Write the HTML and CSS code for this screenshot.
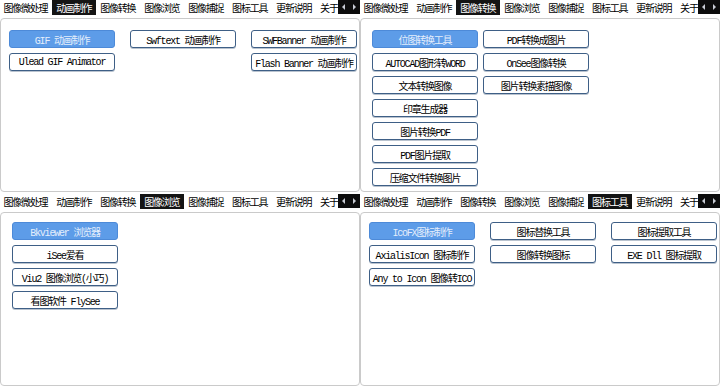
FILE: index.html
```html
<!DOCTYPE html>
<html lang="zh-CN">
<head>
  <meta charset="UTF-8">
  <title>图像工具集</title>
  <link rel="stylesheet" href="styles.css">
</head>
<body>

  <div class="screen">

    <!-- 动画制作 -->
    <div class="quad quad-top">
      <div class="tabbar">
        <div class="tabs">
          <span class="tab">图像微处理</span>
          <span class="tab active">动画制作</span>
          <span class="tab">图像转换</span>
          <span class="tab">图像浏览</span>
          <span class="tab">图像捕捉</span>
          <span class="tab">图标工具</span>
          <span class="tab">更新说明</span>
          <span class="tab">关于</span>
        </div>
        <div class="arrows"><span class="arr-l"></span><span class="arr-r"></span></div>
      </div>
      <div class="panel panel-three">
        <div class="col">
          <button class="btn selected">GIF 动画制作</button>
          <button class="btn">Ulead GIF Animator</button>
        </div>
        <div class="col">
          <button class="btn">Swftext 动画制作</button>
        </div>
        <div class="col">
          <button class="btn">SWFBanner 动画制作</button>
          <button class="btn">Flash Banner 动画制作</button>
        </div>
      </div>
    </div>

    <!-- 图像转换 -->
    <div class="quad quad-top">
      <div class="tabbar">
        <div class="tabs">
          <span class="tab">图像微处理</span>
          <span class="tab">动画制作</span>
          <span class="tab active">图像转换</span>
          <span class="tab">图像浏览</span>
          <span class="tab">图像捕捉</span>
          <span class="tab">图标工具</span>
          <span class="tab">更新说明</span>
          <span class="tab">关于</span>
        </div>
        <div class="arrows"><span class="arr-l"></span><span class="arr-r"></span></div>
      </div>
      <div class="panel panel-two">
        <div class="col">
          <button class="btn selected">位图转换工具</button>
          <button class="btn">AUTOCAD图形转WORD</button>
          <button class="btn">文本转换图像</button>
          <button class="btn">印章生成器</button>
          <button class="btn">图片转换PDF</button>
          <button class="btn">PDF图片提取</button>
          <button class="btn">压缩文件转换图片</button>
        </div>
        <div class="col">
          <button class="btn">PDF转换成图片</button>
          <button class="btn">OnSee图像转换</button>
          <button class="btn">图片转换素描图像</button>
        </div>
      </div>
    </div>

    <!-- 图像浏览 -->
    <div class="quad quad-bottom">
      <div class="tabbar">
        <div class="tabs">
          <span class="tab">图像微处理</span>
          <span class="tab">动画制作</span>
          <span class="tab">图像转换</span>
          <span class="tab active">图像浏览</span>
          <span class="tab">图像捕捉</span>
          <span class="tab">图标工具</span>
          <span class="tab">更新说明</span>
          <span class="tab">关于</span>
        </div>
        <div class="arrows"><span class="arr-l"></span><span class="arr-r"></span></div>
      </div>
      <div class="panel panel-one">
        <div class="col">
          <button class="btn selected">Bkviewer 浏览器</button>
          <button class="btn">iSee爱看</button>
          <button class="btn">Viu2 图像浏览(小巧)</button>
          <button class="btn">看图软件 FlySee</button>
        </div>
      </div>
    </div>

    <!-- 图标工具 -->
    <div class="quad quad-bottom">
      <div class="tabbar">
        <div class="tabs">
          <span class="tab">图像微处理</span>
          <span class="tab">动画制作</span>
          <span class="tab">图像转换</span>
          <span class="tab">图像浏览</span>
          <span class="tab">图像捕捉</span>
          <span class="tab active">图标工具</span>
          <span class="tab">更新说明</span>
          <span class="tab">关于</span>
        </div>
        <div class="arrows"><span class="arr-l"></span><span class="arr-r"></span></div>
      </div>
      <div class="panel panel-three">
        <div class="col">
          <button class="btn selected">IcoFX图标制作</button>
          <button class="btn">AxialisIcon 图标制作</button>
          <button class="btn">Any to Icon 图像转ICO</button>
        </div>
        <div class="col">
          <button class="btn">图标替换工具</button>
          <button class="btn">图像转换图标</button>
        </div>
        <div class="col">
          <button class="btn">图标提取工具</button>
          <button class="btn">EXE Dll 图标提取</button>
        </div>
      </div>
    </div>

  </div>

</body>
</html>
```

FILE: styles.css
```css
body {
  margin: 0;
  background: #fff;
  font-family: "Noto Sans CJK SC", sans-serif;
}
.screen {
  display: grid;
  grid-template-columns: 360px 360px;
  grid-template-rows: 194px 192px;
  width: 720px;
  height: 386px;
  overflow: hidden;
}
.quad {
  display: flex;
  flex-direction: column;
  min-width: 0;
}
.quad-top .panel {
  margin-bottom: 2px;
}

/* tab strip */
.tabbar {
  display: flex;
  height: 15px;
  flex-shrink: 0;
}
.tabs {
  flex: 1;
  display: flex;
  overflow: hidden;
  white-space: nowrap;
  margin-left: -1px;
}
.tab {
  padding: 0 4.4px;
  font-size: 10px;
  letter-spacing: -1.2px;
  line-height: 15px;
  color: #000;
}
.tab.active {
  background: #141414;
  color: #fff;
}
.arrows {
  width: 22px;
  background: #0c0c0c;
  display: flex;
  align-items: center;
  justify-content: space-around;
  height: 14px;
}
.arr-l, .arr-r {
  width: 0;
  height: 0;
  border-top: 3px solid transparent;
  border-bottom: 3px solid transparent;
}
.arr-l {
  border-right: 3px solid #c8ccd4;
}
.arr-r {
  border-left: 3px solid #c8ccd4;
}

/* button panels */
.panel {
  flex: 1;
  margin-top: 3px;
  border: 1px solid #cacaca;
  border-radius: 4px;
  background: #fff;
  display: flex;
  align-items: flex-start;
}
.quad-top .panel {
  padding: 11px 0 0 8px;
}
.quad-bottom .panel {
  padding: 9px 0 0 8px;
}
.panel-three {
  gap: 15px;
}
.panel-two {
  gap: 5px;
}
.quad-top .panel-two,
.quad-bottom .panel-one {
  padding-left: 11px;
}
.col {
  display: flex;
  flex-direction: column;
  gap: 5px;
}
.btn {
  width: 106px;
  height: 18px;
  padding: 0;
  border: 1px solid #3e5f86;
  border-radius: 3px;
  background: #fff;
  box-shadow: 0 1px 0 #b9c3cf;
  font-family: "Liberation Mono", "Noto Sans CJK SC", monospace;
  font-size: 10px;
  letter-spacing: -1.2px;
  color: #000;
  white-space: nowrap;
  text-align: center;
}
.btn.selected {
  background: #5d9ce8;
  border-color: #4d8ad8;
  box-shadow: none;
  color: #e4eefc;
}
```
